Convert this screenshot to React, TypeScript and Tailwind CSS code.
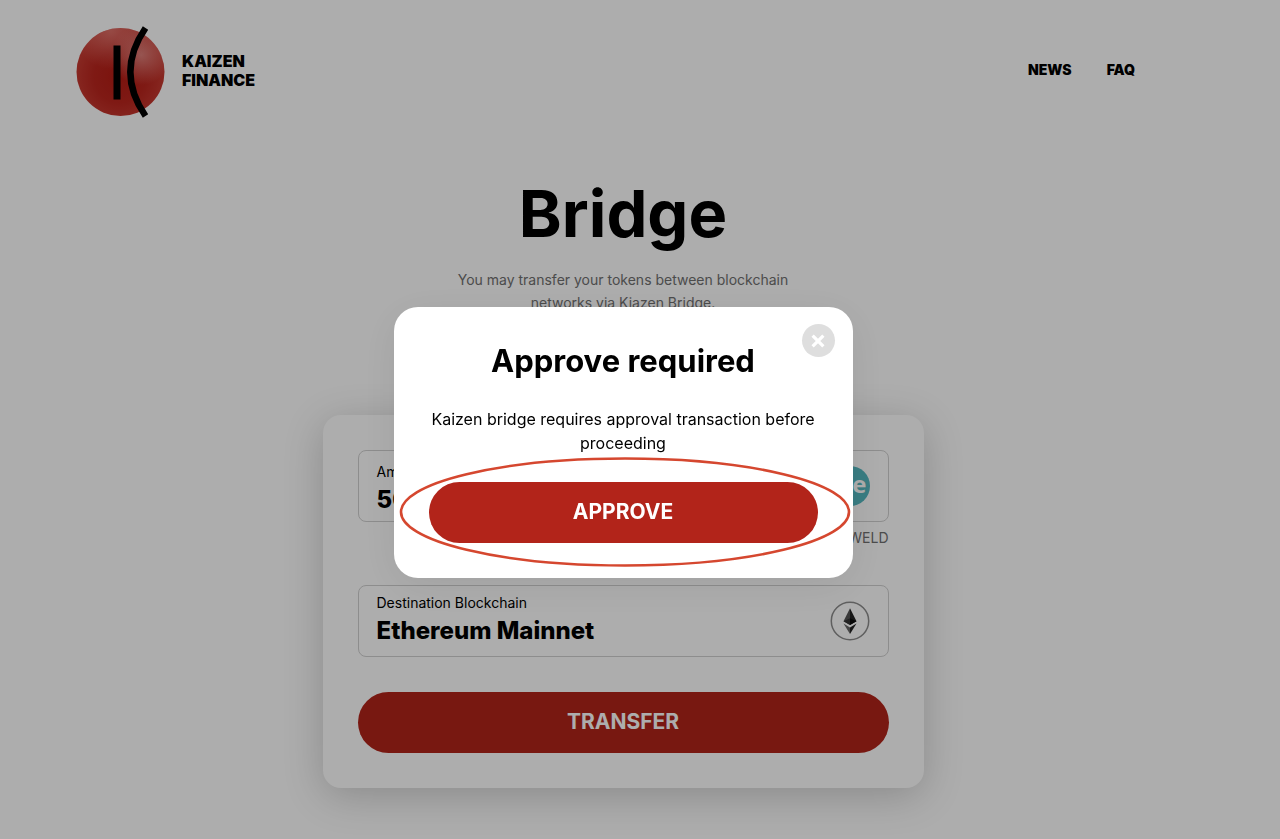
import React, { useState } from 'react';

const KaizenLogo: React.FC = () => (
    <svg width="90" height="94" viewBox="0 0 90 94" aria-hidden className="flex-shrink-0">
        <defs>
            <radialGradient id="sphere" cx="45" cy="52" r="52" gradientUnits="userSpaceOnUse">
                <stop offset="0" stopColor="#b51c15" />
                <stop offset="0.5" stopColor="#bb261e" />
                <stop offset="1" stopColor="#cc4239" />
            </radialGradient>
            <radialGradient id="shine" cx="66" cy="30" r="30" gradientUnits="userSpaceOnUse">
                <stop offset="0" stopColor="#f0aaa6" stopOpacity="0.65" />
                <stop offset="1" stopColor="#f0aaa6" stopOpacity="0" />
            </radialGradient>
            <radialGradient id="rim" cx="36" cy="6" r="38" gradientUnits="userSpaceOnUse">
                <stop offset="0" stopColor="#f0958f" stopOpacity="0.55" />
                <stop offset="1" stopColor="#f0958f" stopOpacity="0" />
            </radialGradient>
        </defs>
        <circle cx="45.500" cy="47" r="44" fill="url(#sphere)" />
        <circle cx="45.500" cy="47" r="44" fill="url(#shine)" />
        <circle cx="45.500" cy="47" r="44" fill="url(#rim)" />
        <rect x="38.500" y="20.500" width="7" height="54" fill="#000" />
        <path d="M70.500 3C50.500 32 50.500 62 70.500 91" fill="none" stroke="#000" strokeWidth="6.500" />
    </svg>
);

const WeldIcon: React.FC = () => (
    <span className="flex h-10 w-10 flex-shrink-0 items-center justify-end rounded-full bg-[#55b8c0] pr-[3px] pb-1 font-['Open_Sans',sans-serif] text-[24px] leading-6 font-bold text-white">
        we
    </span>
);

const EthereumIcon: React.FC = () => (
    <svg width="40" height="40" viewBox="0 0 40 40" aria-hidden className="flex-shrink-0">
        <circle cx="20" cy="20" r="18.700" fill="none" stroke="#8c8c8c" strokeWidth="1.500" />
        <path d="M20 7.300L13.500 20.200L20 24Z" fill="#555" />
        <path d="M20 7.300L26.500 20.200L20 24Z" fill="#222" />
        <path d="M13.500 20.200L20 17.200L20 24Z" fill="#333" />
        <path d="M26.500 20.200L20 17.200L20 24Z" fill="#0c0c0c" />
        <path d="M13.500 22.600L20 26.400V33Z" fill="#666" />
        <path d="M26.500 22.600L20 26.400V33Z" fill="#222" />
    </svg>
);

interface ApproveModalProps {
    onClose: () => void;
}

const ApproveModal: React.FC<ApproveModalProps> = ({ onClose }) => (
    <div className="fixed inset-0 z-50 flex items-start justify-center bg-black/32 pt-[307px] pr-[34px]">
        <div
            role="dialog"
            aria-modal="true"
            aria-labelledby="approve-title"
            className="relative w-full max-w-[459px] rounded-[24px] bg-white px-[35px] pt-8 pb-[35px] text-center shadow-[0_8px_40px_rgba(0,0,0,0.08)]"
        >
            <button
                type="button"
                aria-label="Close"
                onClick={onClose}
                className="absolute top-[17px] right-[18px] flex h-[33px] w-[33px] items-center justify-center rounded-full bg-[#dedede]"
            >
                <svg width="14" height="14" viewBox="0 0 13 13" aria-hidden>
                    <path d="M1.500 1.500L11.500 11.500M11.500 1.500L1.500 11.500" stroke="#fff" strokeWidth="3" />
                </svg>
            </button>
            <h2 id="approve-title" className="text-[31px] leading-[44px] font-bold">Approve required</h2>
            <p className="mt-6 text-[16px] leading-6">Kaizen bridge requires approval transaction before proceeding</p>
            <button
                type="button"
                onClick={onClose}
                className="mt-[27px] h-[61px] w-full rounded-full bg-[#b2241a] pb-0.5 text-[21px] font-bold text-white"
            >
                APPROVE
            </button>
            <svg
                viewBox="0 0 452 110"
                aria-hidden
                className="pointer-events-none absolute right-[2px] bottom-[11px] h-[110px] w-[452px]"
            >
                <ellipse cx="226" cy="55" rx="224" ry="53.500" fill="none" stroke="#d5472f" strokeWidth="2.600" />
            </svg>
        </div>
    </div>
);

const App: React.FC = () => {
    const [open, setOpen] = useState<boolean>(true);
    const [amount, setAmount] = useState<string>('50');

    return (
        <div className="min-h-screen bg-white font-['Inter',sans-serif] text-black">
            <header className="flex items-center justify-between pt-[25px] pr-[145px] pl-[75px]">
                <a href="#" className="flex items-center gap-[17px]">
                    <KaizenLogo />
                    <span className="pb-0.5 text-[16px] leading-[19px] font-black">
                        KAIZEN
                        <br />
                        FINANCE
                    </span>
                </a>
                <nav className="flex gap-[35px] pb-1 text-[14px] leading-5 font-black">
                    <a href="#news">NEWS</a>
                    <a href="#faq">FAQ</a>
                </nav>
            </header>

            <main className="flex flex-col items-center pr-[34px]">
                <h1 className="mt-[55px] text-[65px] leading-[80px] font-bold">Bridge</h1>
                <p className="mt-[14px] max-w-[360px] text-center text-[14px] leading-[23px] text-[#707070]">
                    You may transfer your tokens between blockchain networks via Kiazen Bridge.
                </p>

                <form
                    onSubmit={(e) => {
                        e.preventDefault();
                        setOpen(true);
                    }}
                    className="mt-[101px] w-full max-w-[601px] rounded-[18px] bg-white p-[35px] shadow-[0_8px_40px_rgba(0,0,0,0.2)]"
                >
                    <div className="flex h-[72px] items-center justify-between rounded-[8px] border border-[#d0d0d0] px-[18px]">
                        <div className="flex flex-1 flex-col pt-2">
                            <label htmlFor="amount" className="text-[14px] leading-5">Amount</label>
                            <input
                                id="amount"
                                value={amount}
                                onChange={(e) => setAmount(e.target.value)}
                                className="h-9 w-full text-[24px] font-extrabold outline-none"
                            />
                        </div>
                        <WeldIcon />
                    </div>
                    <p className="mt-[5px] text-right text-[14px] leading-[22px] text-[#707070]">Balance: 100 WELD</p>

                    <div className="mt-9 flex h-[72px] items-center justify-between rounded-[8px] border border-[#d0d0d0] px-[18px]">
                        <div className="flex flex-1 flex-col">
                            <label htmlFor="destination" className="text-[14px] leading-5">Destination Blockchain</label>
                            <select id="destination" className="h-9 w-full appearance-none text-[24px] font-extrabold outline-none">
                                <option>Ethereum Mainnet</option>
                            </select>
                        </div>
                        <EthereumIcon />
                    </div>

                    <button
                        type="submit"
                        className="mt-[35px] h-[61px] w-full rounded-full bg-[#b2241a] pb-0.5 text-[21px] font-bold text-white"
                    >
                        TRANSFER
                    </button>
                </form>
            </main>

            {open && <ApproveModal onClose={() => setOpen(false)} />}
        </div>
    );
};

export default App;
